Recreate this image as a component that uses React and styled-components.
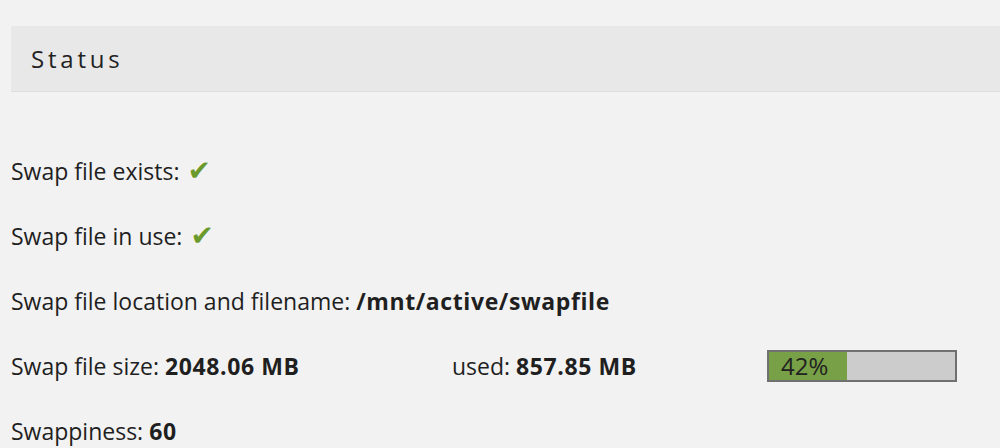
import React from "react";
import styled, { createGlobalStyle } from "styled-components";

const GlobalStyle = createGlobalStyle`
  html, body {
    margin: 0;
    padding: 0;
    background: #f2f2f2;
  }
  body {
    font-family: "Open Sans", "Noto Sans", sans-serif;
    color: #1f1f1f;
    overflow: hidden;
  }
`;

const Page = styled.div`
  padding: 26px 0 0 11px;
`;

const Header = styled.div`
  height: 66px;
  background: #e8e8e8;
  border-bottom: 1px solid #dedede;
  display: flex;
  align-items: center;
  padding-left: 20px;
  margin-right: -20px;
  box-sizing: border-box;
`;

const Title = styled.h2`
  margin: 0;
  font-size: 24px;
  font-weight: 400;
  letter-spacing: 3.8px;
  color: #222;
`;

const List = styled.div`
  padding-top: 46px;
`;

const Row = styled.div`
  height: 65px;
  display: grid;
  grid-template-columns: ${(p) => (p.cols ? p.cols : "1fr")};
  align-items: center;
  font-size: 23px;
`;

const Label = styled.span`
  white-space: nowrap;
`;

const Value = styled.b`
  font-weight: 700;
  letter-spacing: 0.6px;
`;

const Check = styled.span`
  color: #6a9a2c;
  font-family: "DejaVu Sans", sans-serif;
  font-size: 28px;
  line-height: 1;
  margin-left: 2px;
`;

const Bar = styled.div`
  width: 190px;
  height: 32px;
  box-sizing: border-box;
  border: 2px solid #707070;
  background: #cccccc;
  display: flex;
`;

const Fill = styled.div`
  height: 100%;
  background: #77a047;
  display: flex;
  align-items: center;
  padding-left: 12px;
  box-sizing: border-box;
  font-size: 24px;
  color: #222;
  white-space: nowrap;
`;

const usedPct = 42;

export default function App() {
  return (
    <>
      <GlobalStyle />
      <Page>
        <Header>
          <Title>Status</Title>
        </Header>
        <List>
          <Row>
            <Label>
              Swap file exists: <Check>✔</Check>
            </Label>
          </Row>
          <Row>
            <Label>
              Swap file in use: <Check>✔</Check>
            </Label>
          </Row>
          <Row>
            <Label>
              Swap file location and filename: <Value>/mnt/active/swapfile</Value>
            </Label>
          </Row>
          <Row cols="441px 315px 190px">
            <Label>
              Swap file size: <Value>2048.06 MB</Value>
            </Label>
            <Label>
              used: <Value>857.85 MB</Value>
            </Label>
            <Bar>
              <Fill style={{ width: `${usedPct}%` }}>{usedPct}%</Fill>
            </Bar>
          </Row>
          <Row>
            <Label>
              Swappiness: <Value>60</Value>
            </Label>
          </Row>
        </List>
      </Page>
    </>
  );
}
